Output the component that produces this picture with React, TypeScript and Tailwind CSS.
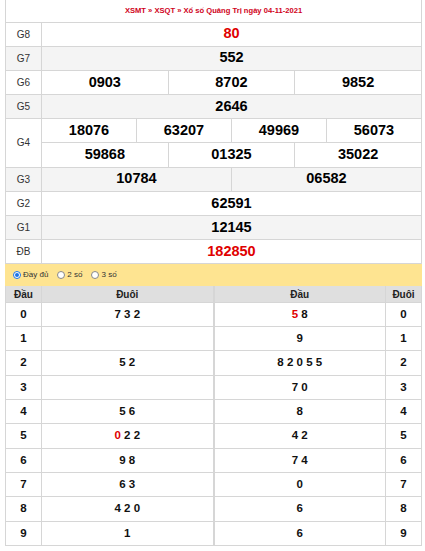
import React from 'react';

type Prize = { label: string; rows: string[][]; red?: boolean };

const prizes: Prize[] = [
    { label: 'G8', rows: [['80']], red: true },
    { label: 'G7', rows: [['552']] },
    { label: 'G6', rows: [['0903', '8702', '9852']] },
    { label: 'G5', rows: [['2646']] },
    { label: 'G4', rows: [['18076', '63207', '49969', '56073'], ['59868', '01325', '35022']] },
    { label: 'G3', rows: [['10784', '06582']] },
    { label: 'G2', rows: [['62591']] },
    { label: 'G1', rows: [['12145']] },
    { label: 'ĐB', rows: [['182850']], red: true },
];

// each digit: [text, red?]
type Digits = [string, boolean?][];

const heads: { dau: string; duoi: Digits; dau2: Digits; duoi2: string }[] = [
    { dau: '0', duoi: [['7'], ['3'], ['2']], dau2: [['5', true], ['8']], duoi2: '0' },
    { dau: '1', duoi: [], dau2: [['9']], duoi2: '1' },
    { dau: '2', duoi: [['5'], ['2']], dau2: [['8'], ['2'], ['0'], ['5'], ['5']], duoi2: '2' },
    { dau: '3', duoi: [], dau2: [['7'], ['0']], duoi2: '3' },
    { dau: '4', duoi: [['5'], ['6']], dau2: [['8']], duoi2: '4' },
    { dau: '5', duoi: [['0', true], ['2'], ['2']], dau2: [['4'], ['2']], duoi2: '5' },
    { dau: '6', duoi: [['9'], ['8']], dau2: [['7'], ['4']], duoi2: '6' },
    { dau: '7', duoi: [['6'], ['3']], dau2: [['0']], duoi2: '7' },
    { dau: '8', duoi: [['4'], ['2'], ['0']], dau2: [['6']], duoi2: '8' },
    { dau: '9', duoi: [['1']], dau2: [['6']], duoi2: '9' },
];

function DigitList({ items }: { items: Digits }) {
    return (
        <>
            {items.map(([d, red], i) => (
                <span key={i} className={red ? 'text-[#e00000]' : ''}>
                    {i > 0 ? ' ' : ''}
                    {d}
                </span>
            ))}
        </>
    );
}

function Radio({ checked, label }: { checked?: boolean; label: string }) {
    return (
        <label className="flex items-center gap-[2px] mr-[9px]">
            <span
                className={
                    'w-[8px] h-[8px] rounded-full border flex items-center justify-center bg-white ' +
                    (checked ? 'border-[#1a73e8]' : 'border-[#888]')
                }
            >
                {checked && <span className="w-[4px] h-[4px] rounded-full bg-[#1a73e8]" />}
            </span>
            <span>{label}</span>
        </label>
    );
}

export default function App() {
    const span = (n: number) => 12 / n;

    return (
        <div className="bg-white w-[425px] min-h-[551px] pl-[5px] font-['Liberation_Sans',Arial,sans-serif] text-[#222]">
            <table className="w-[417px] table-fixed border-collapse">
                <colgroup>
                    <col className="w-[36px]" />
                    {Array.from({ length: 12 }).map((_, i) => (
                        <col key={i} />
                    ))}
                </colgroup>
                <tbody>
                    <tr className="h-[22px]">
                        <td
                            colSpan={13}
                            className="border border-[#d6d6d6] border-t-0 text-center text-[7.6px] font-bold text-[#d0021b]"
                        >
                            XSMT » XSQT » Xổ số Quảng Trị ngày 04-11-2021
                        </td>
                    </tr>
                    {prizes.map((p, pi) =>
                        p.rows.map((row, ri) => (
                            <tr key={p.label + ri} className={'h-[24.2px] ' + (pi % 2 === 1 ? 'bg-[#f4f4f4]' : 'bg-white')}>
                                {ri === 0 && (
                                    <td
                                        rowSpan={p.rows.length}
                                        className="border border-[#d6d6d6] text-center text-[10px] text-[#333]"
                                    >
                                        {p.label}
                                    </td>
                                )}
                                {row.map((n, ni) => (
                                    <td
                                        key={ni}
                                        colSpan={span(row.length)}
                                        className={
                                            'border border-[#d6d6d6] text-center text-[14.5px] font-bold ' +
                                            (p.red ? 'text-[#e00000]' : 'text-black')
                                        }
                                    >
                                        {n}
                                    </td>
                                ))}
                            </tr>
                        ))
                    )}
                </tbody>
            </table>

            <div className="w-[417px] h-[22px] bg-[#fee491] flex items-center pl-[8px] text-[8px] text-[#333]">
                <Radio checked label="Đầy đủ" />
                <Radio label="2 số" />
                <Radio label="3 số" />
            </div>

            <div className="w-[417px] flex">
                {[0, 1].map((side) => (
                    <table key={side} className="w-[208.5px] table-fixed border-collapse">
                        <colgroup>
                            {side === 0 ? (
                                <>
                                    <col className="w-[36px]" />
                                    <col />
                                </>
                            ) : (
                                <>
                                    <col />
                                    <col className="w-[36px]" />
                                </>
                            )}
                        </colgroup>
                        <thead>
                            <tr className="h-[16px] bg-[#dfdfdf] text-[10px] font-bold text-[#222]">
                                <th className="border border-[#d6d6d6] border-t-0 font-bold">Đầu</th>
                                <th className="border border-[#d6d6d6] border-t-0 font-bold">Đuôi</th>
                            </tr>
                        </thead>
                        <tbody>
                            {heads.map((h) => (
                                <tr key={h.dau} className="h-[24.3px] text-[11.5px] font-bold text-[#111]">
                                    {side === 0 ? (
                                        <>
                                            <td className="border border-[#d6d6d6] text-center">{h.dau}</td>
                                            <td className="border border-[#d6d6d6] text-center">
                                                <DigitList items={h.duoi} />
                                            </td>
                                        </>
                                    ) : (
                                        <>
                                            <td className="border border-[#d6d6d6] text-center">
                                                <DigitList items={h.dau2} />
                                            </td>
                                            <td className="border border-[#d6d6d6] text-center">{h.duoi2}</td>
                                        </>
                                    )}
                                </tr>
                            ))}
                        </tbody>
                    </table>
                ))}
            </div>
        </div>
    );
}
